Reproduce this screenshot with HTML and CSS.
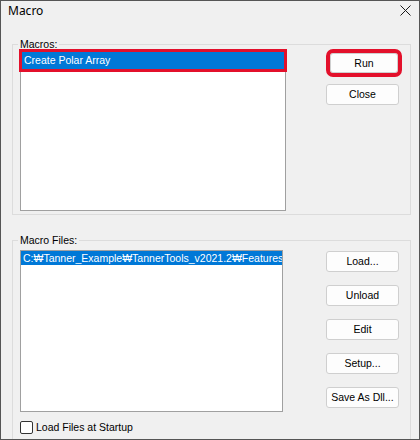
FILE: index.html
```html
<!DOCTYPE html>
<html lang="en">
<head>
<meta charset="utf-8">
<title>Macro</title>
<link rel="stylesheet" href="styles.css">
</head>
<body>
<div class="window">
  <div class="titlebar">
    <span class="title">Macro</span>
    <svg class="close" viewBox="0 0 11 11" aria-label="Close">
      <path d="M0.5 0.5 L10.5 10.5 M10.5 0.5 L0.5 10.5" />
    </svg>
  </div>
  <div class="body">
    <section class="group group-macros">
      <div class="group-title">Macros:</div>
      <div class="group-row">
        <div class="listbox listbox-macros">
          <div class="item selected marked">Create Polar Array</div>
        </div>
        <div class="buttons buttons-macros">
          <button class="btn btn-run">Run</button>
          <button class="btn btn-close">Close</button>
        </div>
      </div>
    </section>
    <section class="group group-files">
      <div class="group-title">Macro Files:</div>
      <div class="group-row">
        <div class="listbox listbox-files">
          <div class="item selected">C:₩Tanner_Example₩TannerTools_v2021.2₩Features₩Macros</div>
        </div>
        <div class="buttons buttons-files">
          <button class="btn">Load...</button>
          <button class="btn">Unload</button>
          <button class="btn">Edit</button>
          <button class="btn">Setup...</button>
          <button class="btn">Save As Dll...</button>
        </div>
      </div>
      <label class="check"><input type="checkbox">Load Files at Startup</label>
    </section>
  </div>
</div>
</body>
</html>
```

FILE: styles.css
```css
html, body {
  margin: 0;
  padding: 0;
}

body {
  background: #f0f0f0;
  font-family: "Liberation Sans", Arial, "Noto Sans CJK KR", sans-serif;
  font-size: 10.5px;
  color: #000;
}

.window {
  box-sizing: border-box;
  width: 420px;
  height: 440px;
  border: 1px solid #555;
  background: #f0f0f0;
  overflow: hidden;
}

/* title bar */
.titlebar {
  box-sizing: border-box;
  height: 30px;
  display: flex;
  justify-content: space-between;
  align-items: flex-start;
  padding: 2px 8px 0 7px;
}

.title {
  font-family: "Noto Sans", "Liberation Sans", sans-serif;
  font-size: 12px;
  line-height: 16px;
  color: #000;
}

.close {
  width: 11px;
  height: 11px;
  margin-top: 2px;
}

.close path {
  stroke: #1a1a1a;
  stroke-width: 1;
  fill: none;
}

/* dialog body */
.body {
  padding: 13px 8px 0 11px;
}

.group {
  border: 1px solid #dcdcdc;
  padding: 0 11px 3px 7px;
}

.group-files {
  margin-top: 25px;
  padding-bottom: 12px;
}

.group-title {
  width: fit-content;
  margin: -7px 0 0 -2px;
  padding: 0 2px;
  background: #f0f0f0;
  line-height: 12px;
}

.group-row {
  display: flex;
  justify-content: space-between;
  align-items: flex-start;
}

/* list boxes */
.listbox {
  box-sizing: border-box;
  background: #fff;
  border: 1px solid #a0a0a0;
}

.listbox-macros {
  width: 266px;
  height: 161px;
  padding: 1px;
}

.listbox-files {
  width: 263px;
  height: 162px;
  margin-top: 4px;
}

.item {
  white-space: nowrap;
  overflow: hidden;
  padding-left: 2px;
}

.listbox-macros .item {
  line-height: 17px;
}

.listbox-files .item {
  line-height: 14px;
}

.selected {
  background: #0078d7;
  color: #fff;
}

.marked {
  outline: 3px solid #e3102b;
}

/* push buttons */
.buttons {
  width: 73px;
  display: flex;
  flex-direction: column;
}

.buttons-macros {
  padding-top: 3px;
}

.buttons-files {
  padding-top: 5px;
  gap: 13px;
}

.btn {
  box-sizing: border-box;
  width: 73px;
  height: 21px;
  margin: 0;
  padding: 0;
  border: 1px solid #cfcfcf;
  border-radius: 3px;
  background: #fdfdfd;
  font: inherit;
  line-height: 19px;
  color: #000;
  text-align: center;
}

.btn-run {
  width: 68px;
  height: 20px;
  margin-left: 4px;
  outline: 4px solid #e3102b;
}

.btn-close {
  margin-top: 11px;
}

/* checkbox */
.check {
  display: flex;
  align-items: center;
  margin-top: 9px;
  line-height: 13px;
}

.check input {
  appearance: none;
  box-sizing: border-box;
  width: 13px;
  height: 13px;
  margin: 0 3px 0 0;
  border: 1px solid #333;
  border-radius: 2px;
  background: #fff;
}
```
